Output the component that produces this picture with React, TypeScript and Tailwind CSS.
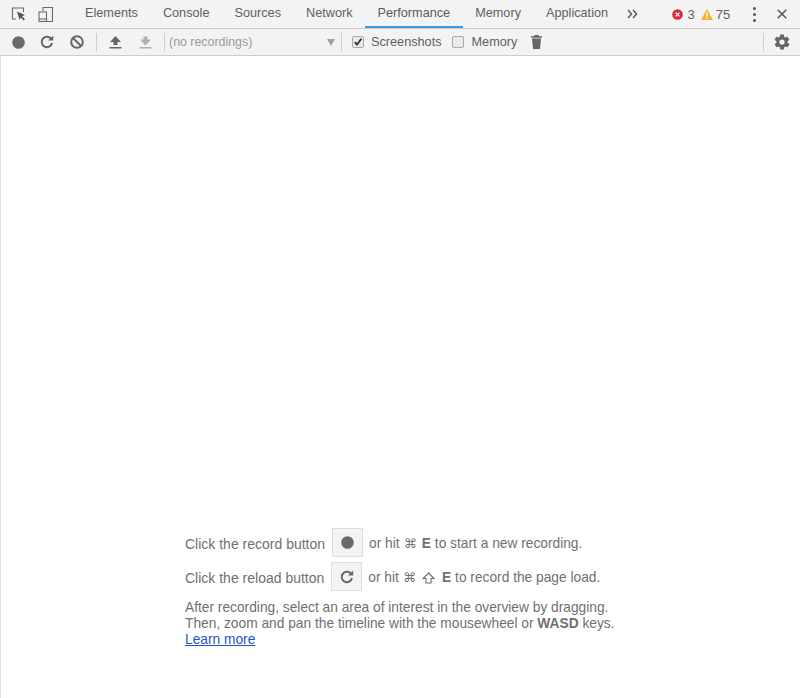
const font = { fontFamily: '"Liberation Sans", Arial, sans-serif' }

function TabLabel({ label, active }: { label: string; active?: boolean }) {
  return (
    <div
      className={
        active
          ? 'h-[28px] px-[12.5px] flex items-center text-[#5a5a5a] border-b-2 border-[#3a9be0]'
          : 'h-[28px] px-[12.5px] flex items-center text-[#5f5f5f] border-b-2 border-transparent'
      }
    >
      <span className="pt-[2px]">{label}</span>
    </div>
  )
}

function RecordIcon({ size = 13 }: { size?: number }) {
  return (
    <svg width={size} height={size} viewBox="0 0 13 13">
      <circle cx="6.5" cy="6.5" r="6.3" fill="#6a6a6a" />
    </svg>
  )
}

function ReloadIcon({ size = 14 }: { size?: number }) {
  return (
    <svg width={size} height={size} viewBox="0 0 14 14" fill="none">
      <path d="M11.3 4.2A5.2 5.2 0 1 0 12 8" stroke="#666" strokeWidth="2" />
      <path d="M8 5.4h5.2V0.4z" fill="#666" />
    </svg>
  )
}

function Sep() {
  return <div className="w-px h-[18px] bg-[#cfcfcf]" />
}

function Checkbox({ checked }: { checked?: boolean }) {
  return (
    <div className="w-[12px] h-[12px] rounded-[2px] bg-[#e9e9e9] border border-[#a9a9a9] flex items-center justify-center">
      {checked && (
        <svg width="10" height="10" viewBox="0 0 10 10" fill="none">
          <path d="M1.8 5.2 4 7.6 8.4 1.8" stroke="#333" strokeWidth="1.8" />
        </svg>
      )}
    </div>
  )
}

function TabBar() {
  return (
    <div className="h-[28px] flex items-center bg-[#f3f3f3] border-b border-[#cdcdcd] box-content">
      <div className="w-[72.5px] pl-[11px] flex items-center gap-[12px]">
        <svg width="15" height="16" viewBox="0 0 15 16" fill="none">
          <path d="M5 13H1.5V2h11v4" stroke="#6a6a6a" strokeWidth="1.1" />
          <path d="M6 5.5 14 9l-3 1.2 3 3-1.3 1.3-3-3L8.500 14z" fill="#555" />
        </svg>
        <svg width="16" height="17" viewBox="0 0 16 17" fill="none">
          <path d="M5 5V1.500h9.500v14H9" stroke="#6a6a6a" strokeWidth="1.100" />
          <rect x="1" y="6" width="7.500" height="9.500" stroke="#6a6a6a" strokeWidth="1.100" />
          <path d="M1 13h7.500" stroke="#6a6a6a" strokeWidth="1.100" />
        </svg>
      </div>
      <TabLabel label="Elements" />
      <TabLabel label="Console" />
      <TabLabel label="Sources" />
      <TabLabel label="Network" />
      <TabLabel label="Performance" active />
      <TabLabel label="Memory" />
      <TabLabel label="Application" />
      <svg className="ml-[6px]" width="11" height="10" viewBox="0 0 11 10" fill="none">
        <path d="M1 1l3.600 4L1 9M6 1l3.600 4L6 9" stroke="#555" strokeWidth="1.400" />
      </svg>
      <div className="ml-[34px] flex items-center text-[#5f5f5f] text-[13px]">
        <svg width="11" height="11" viewBox="0 0 11 11">
          <circle cx="5.500" cy="5.500" r="5.300" fill="#e0263a" />
          <path d="M3.600 3.600l3.800 3.800M7.400 3.600l-3.800 3.800" stroke="#fff" strokeWidth="1.300" />
        </svg>
        <span className="ml-[5px] pt-[2px]">3</span>
        <svg className="ml-[6px]" width="12" height="11" viewBox="0 0 12 11">
          <path d="M6 0 12 11H0z" fill="#f2b52e" />
          <path d="M5.300 3.500h1.400v4H5.300zM5.300 8.300h1.400v1.300H5.300z" fill="#fff" />
        </svg>
        <span className="ml-[3px] pt-[2px]">75</span>
      </div>
      <div className="ml-[23px] flex flex-col gap-[3px]">
        <div className="w-[3px] h-[3px] rounded-full bg-[#555]" />
        <div className="w-[3px] h-[3px] rounded-full bg-[#555]" />
        <div className="w-[3px] h-[3px] rounded-full bg-[#555]" />
      </div>
      <svg className="ml-[21px]" width="10" height="10" viewBox="0 0 10 10" fill="none">
        <path d="M.7.7l8.600 8.600M9.300.7.7 9.300" stroke="#555" strokeWidth="1.500" />
      </svg>
    </div>
  )
}

function Toolbar() {
  return (
    <div className="h-[26px] flex items-center bg-[#f3f3f3] border-b border-[#cdcdcd] box-content pl-[12px]">
      <RecordIcon />
      <div className="ml-[15px]"><ReloadIcon /></div>
      <svg className="ml-[16px]" width="14" height="14" viewBox="0 0 14 14" fill="none">
        <circle cx="7" cy="7" r="5.800" stroke="#666" strokeWidth="2" />
        <path d="M3 3l8 8" stroke="#666" strokeWidth="2" />
      </svg>
      <div className="ml-[12px]"><Sep /></div>
      <svg className="ml-[12px]" width="13" height="14" viewBox="0 0 13 14">
        <path d="M6.500 1 12 7H8.500v3h-4V7H1zM.5 12h12v1.500H.5z" fill="#666" />
      </svg>
      <svg className="ml-[17px]" width="13" height="14" viewBox="0 0 13 14">
        <path d="M6.500 10.500 12 4.500H8.500v-3h-4v3H1zM.5 12h12v1.500H.5z" fill="#b0b0b0" />
      </svg>
      <div className="ml-[12px]"><Sep /></div>
      <div className="w-[176px] pl-[4px] flex items-center justify-between pr-[6px]">
        <span className="text-[#9a9a9a] text-[12.4px]">(no recordings)</span>
        <svg width="8" height="8" viewBox="0 0 8 8">
          <path d="M0 1h8L4 8z" fill="#a0a0a0" />
        </svg>
      </div>
      <Sep />
      <div className="ml-[10px]"><Checkbox checked /></div>
      <span className="ml-[7px] pt-[2px] text-[#5f5f5f]">Screenshots</span>
      <div className="ml-[10px]"><Checkbox /></div>
      <span className="ml-[8px] pt-[2px] text-[#5f5f5f]">Memory</span>
      <svg className="ml-[14px]" width="11" height="14" viewBox="0 0 11 14">
        <path d="M3.500 0h4l.5 1.200h3v1.600H0V1.200h3zM1 3.600h9L9 14H2z" fill="#666" />
      </svg>
      <div className="ml-auto flex items-center pr-[9px]">
        <Sep />
        <svg className="ml-[9px]" width="18" height="18" viewBox="0 0 24 24">
          <path
            d="M19.400 13c.1-.3.1-.7.1-1s0-.7-.1-1l2.100-1.600c.2-.2.2-.4.1-.6l-2-3.500c-.1-.2-.4-.3-.6-.2l-2.500 1c-.5-.4-1.100-.7-1.700-1l-.4-2.600c0-.3-.2-.5-.5-.5h-4c-.3 0-.5.200-.5.500l-.4 2.600c-.6.300-1.200.6-1.700 1l-2.500-1c-.2-.1-.5 0-.6.200l-2 3.500c-.1.200-.1.400.1.600L4.600 11c-.1.300-.1.700-.1 1s0 .7.100 1l-2.100 1.600c-.2.200-.2.400-.1.600l2 3.500c.1.200.4.300.6.200l2.500-1c.5.400 1.100.7 1.700 1l.4 2.600c0 .3.200.5.500.5h4c.3 0 .5-.2.500-.5l.4-2.600c.6-.3 1.200-.6 1.700-1l2.500 1c.2.100.5 0 .6-.2l2-3.500c.1-.2.1-.4-.1-.6zM12 15.500a3.500 3.500 0 1 1 0-7 3.500 3.500 0 0 1 0 7z"
            fill="#666"
          />
        </svg>
      </div>
    </div>
  )
}

function KeyButton({ children }: { children: React.ReactNode }) {
  return (
    <div className="w-[31px] h-[29px] -mt-[2px] bg-[#f3f3f3] border border-[#dedede] flex items-center justify-center ml-[7px] mr-[6px]">
      {children}
    </div>
  )
}

function Cmd() {
  return <span style={{ fontFamily: '"DejaVu Sans", sans-serif' }} className="text-[13px] mx-[4px]">⌘</span>
}

function Landing() {
  return (
    <div className="flex-1 flex flex-col border-l border-[#e2e2e2] pl-[184px] pb-[50px] justify-end text-[#707070] text-[13.75px] leading-[16px]">
      <div className="flex items-center h-[29px] pt-[2px]">
        <span className="text-[14px]">Click the record button</span>
        <KeyButton><RecordIcon size={13} /></KeyButton>
        <span>or hit</span>
        <Cmd />
        <b className="ml-[1px] mr-[4px]">E</b>
        <span>to start a new recording.</span>
      </div>
      <div className="flex items-center h-[29px] pt-[2px] mt-[5px]">
        <span className="text-[14px]">Click the reload button</span>
        <KeyButton><ReloadIcon size={14} /></KeyButton>
        <span>or hit</span>
        <Cmd />
        <svg className="mx-[2px]" width="13" height="12" viewBox="0 0 13 12" fill="none">
          <path d="M6.500 1 12 6.500H9v4.500H4V6.500H1z" stroke="#6d6d6d" strokeWidth="1.100" />
        </svg>
        <b className="ml-[5px] mr-[4px]">E</b>
        <span>to record the page load.</span>
      </div>
      <div className="mt-[9px]">
        <p>After recording, select an area of interest in the overview by dragging.</p>
        <p>Then, zoom and pan the timeline with the mousewheel or <b>WASD</b> keys.</p>
        <a className="text-[#1a55c9] underline">Learn more</a>
      </div>
    </div>
  )
}

export default function App() {
  return (
    <div className="w-[800px] h-[698px] bg-white flex flex-col text-[12.7px] overflow-hidden" style={font}>
      <TabBar />
      <Toolbar />
      <Landing />
    </div>
  )
}
